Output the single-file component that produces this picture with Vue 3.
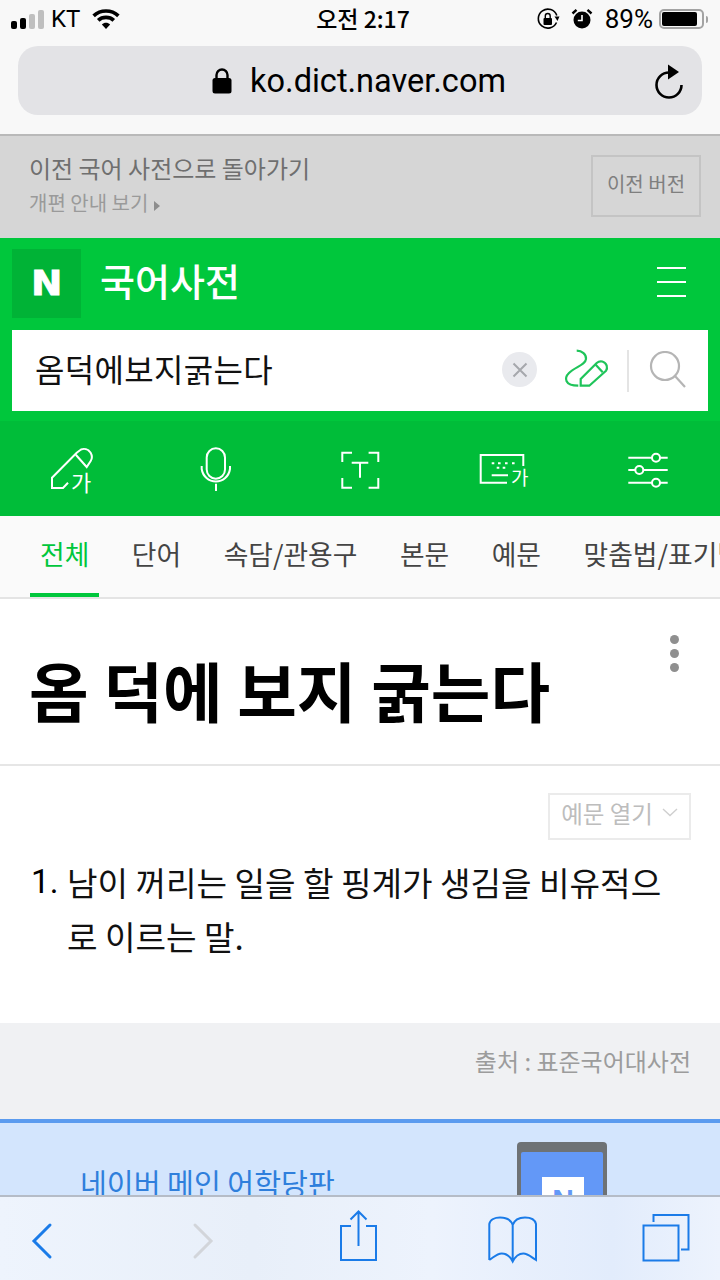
<template>
  <div class="screen">
    <header class="browser-top">
      <div class="status">
        <div class="status-left">
          <div class="signal"><i class="on h1"></i><i class="on h2"></i><i class="h3"></i><i class="h4"></i></div>
          <span class="carrier">KT</span>
          <svg class="wifi" width="28" height="22" viewBox="0 0 30 24">
            <path d="M1.5 8.5C9 1.5 21 1.5 28.5 8.5" fill="none" stroke="#000" stroke-width="4" />
            <path d="M6.5 13.5C11 9.2 19 9.2 23.5 13.5" fill="none" stroke="#000" stroke-width="4" />
            <path d="M10.5 18C13 15.4 17 15.4 19.5 18L15 23Z" fill="#000" />
          </svg>
        </div>
        <span class="clock">오전 2:17</span>
        <div class="status-right">
          <svg width="24" height="24" viewBox="0 0 24 24">
            <path d="M20.5 15.5A9.5 9.5 0 1 1 20.8 8.5" fill="none" stroke="#000" stroke-width="1.6" />
            <path d="M23.5 9.5L18.5 9.5L21.5 14Z" fill="#000" />
            <rect x="7.5" y="11" width="8.5" height="7" rx="1" fill="#000" />
            <path d="M9.3 11V9a2.4 2.4 0 0 1 4.9 0v2" fill="none" stroke="#000" stroke-width="1.4" />
          </svg>
          <svg class="alarm" width="22" height="24" viewBox="0 0 22 24">
            <circle cx="11" cy="13" r="8.5" fill="#000" />
            <path d="M11 8v5.5H6.8" fill="none" stroke="#fff" stroke-width="1.6" />
            <path d="M1.5 6.5L5.5 2.8M20.5 6.5L16.5 2.8" stroke="#000" stroke-width="2.4" />
          </svg>
          <span class="pct">89%</span>
          <div class="battery"><div class="battery-fill"></div></div>
          <div class="battery-nub"></div>
        </div>
      </div>
      <div class="url-bar">
        <div class="url">
          <svg width="20" height="26" viewBox="0 0 20 26">
            <rect x="0.5" y="10" width="19" height="15.5" rx="2.5" fill="#000" />
            <path d="M4.5 11V7a5.5 5.5 0 0 1 11 0v4" fill="none" stroke="#000" stroke-width="2.4" />
          </svg>
          <span>ko.dict.naver.com</span>
        </div>
        <svg class="reload" width="32" height="36" viewBox="0 0 32 36">
          <path d="M16 8.5A12.5 12.5 0 1 0 28.5 21" fill="none" stroke="#000" stroke-width="2.6" />
          <path d="M15 0.5L26 8L15 15.5Z" fill="#000" />
        </svg>
      </div>
    </header>

    <section class="old-version">
      <div class="old-text">
        <p class="old-title">이전 국어 사전으로 돌아가기</p>
        <p class="old-sub">개편 안내 보기 <span class="caret"></span></p>
      </div>
      <button class="old-btn">이전 버전</button>
    </section>

    <section class="green-head">
      <div class="brand-row">
        <div class="brand"><div class="n-box"><span>N</span></div><h1>국어사전</h1></div>
        <div class="menu"><i></i><i></i><i></i></div>
      </div>
      <div class="search">
        <span class="query">옴덕에보지굵는다</span>
        <span class="clear">
          <svg width="16" height="16" viewBox="0 0 16 16"><path d="M1.5 1.5L14.5 14.5M14.5 1.5L1.5 14.5" stroke="#a6a8ac" stroke-width="2" /></svg>
        </span>
        <svg class="pen" width="48" height="44" viewBox="0 0 48 44" fill="none" stroke="#1fc45a" stroke-width="2.2">
          <path d="M14.7 3.7C20 3.7 24.5 7.5 24 12C23.5 18 13 20 7 26C2 31 2.5 38.7 16.3 38.7" />
          <path d="M18.7 38.7V32L34.7 16C38 13 43 14 44.7 18.7C45.2 20.5 45 22.5 44 23.7L27.3 38.7Z" />
          <path d="M33 17L40.7 25.3" />
        </svg>
        <span class="search-sep"></span>
        <svg class="glass" width="38" height="38" viewBox="0 0 38 38" fill="none" stroke="#b5b5b5" stroke-width="2.2">
          <circle cx="16" cy="15" r="14" />
          <path d="M26 25L36 36" />
        </svg>
      </div>
    </section>

    <nav class="tools">
      <div class="tool">
        <svg width="56" height="56" viewBox="0 0 56 56" fill="none" stroke="#fff" stroke-width="2">
          <path d="M24 41.7L19 47H8V36.7L32.7 11.7L37 8.5C40 7.2 44 8 46.5 11.5C48.5 15 48 18 46.7 20L42.7 26L32 14" />
          <text x="27" y="50" class="ga" font-size="22">가</text>
        </svg>
      </div>
      <div class="tool">
        <svg width="56" height="56" viewBox="0 0 56 56" fill="none" stroke="#fff" stroke-width="2">
          <rect x="18.7" y="7.3" width="18.3" height="30.4" rx="9.15" />
          <path d="M13.7 25V28A14.3 14.7 0 0 0 42 28V25M28 42.7V50" />
        </svg>
      </div>
      <div class="tool">
        <svg width="56" height="56" viewBox="0 0 56 56" fill="none" stroke="#fff" stroke-width="2">
          <path d="M20 11.7H10.3V21M36.6 11.7H46.3V21M10.3 37V46.7H20M46.3 37V46.7H36.6" />
          <path d="M19.7 21.7H36.3M28 21.7V36.7" />
        </svg>
      </div>
      <div class="tool">
        <svg width="56" height="56" viewBox="0 0 56 56" fill="none" stroke="#fff" stroke-width="2">
          <path d="M47.3 25V14H4.7V41.7H31" />
          <path d="M15.7 22.3h2.6M22 22.3h2.6M29 22.3h2.6M36 22.3h2.6M20.7 26.7h2.6M26.7 26.7h2.6M15.7 34.3H32" />
          <text x="35" y="44" class="ga" font-size="19">가</text>
        </svg>
      </div>
      <div class="tool">
        <svg width="56" height="56" viewBox="0 0 56 56" fill="#00bd39" stroke="#fff" stroke-width="2">
          <path d="M8.3 16.7H47.7M8.3 29H47.7M8.3 41.7H47.7" />
          <circle cx="36" cy="16.7" r="4" />
          <circle cx="19.3" cy="29" r="4" />
          <circle cx="36" cy="41.7" r="4" />
        </svg>
      </div>
    </nav>

    <div class="tabs">
      <span v-for="(tab, i) in tabs" :key="tab" class="tab" :class="{ active: i === 0 }">{{ tab }}</span>
    </div>

    <section class="entry-head">
      <h2>옴 덕에 보지 굵는다</h2>
      <div class="kebab"><i></i><i></i><i></i></div>
    </section>

    <section class="entry-body">
      <div class="ex-row">
        <button class="ex-btn">
          예문 열기
          <svg width="16" height="9" viewBox="0 0 16 9" fill="none" stroke="#cfcfcf" stroke-width="1.4"><path d="M1 1L8 7.5L15 1" /></svg>
        </button>
      </div>
      <div class="meaning">
        <span class="num">1.</span>
        <p>남이 꺼리는 일을 할 핑계가 생김을 비유적으로 이르는 말.</p>
      </div>
    </section>

    <div class="source">출처 : 표준국어대사전</div>

    <section class="promo">
      <span class="promo-text">네이버 메인 어학당판</span>
      <div class="phone">
        <div class="phone-screen"><span class="phone-n">N</span></div>
      </div>
    </section>

    <footer class="toolbar">
      <svg width="24" height="38" viewBox="0 0 24 38" fill="none" stroke="#1a7be8" stroke-width="3" stroke-linecap="round">
        <path d="M20 3L4 19L20 35" />
      </svg>
      <svg width="24" height="38" viewBox="0 0 24 38" fill="none" stroke="#d2d5da" stroke-width="3" stroke-linecap="round">
        <path d="M4 3L20 19L4 35" />
      </svg>
      <svg width="40" height="54" viewBox="0 0 40 54" fill="none" stroke="#1a7be8" stroke-width="2">
        <path d="M12 16H2V50H37V16H27M19.5 36V2M11.5 9.5L19.5 1.5L27.5 9.5" />
      </svg>
      <svg width="50" height="48" viewBox="0 0 50 48" fill="none" stroke="#1a7be8" stroke-width="2">
        <path d="M1.3 44V8C2 3.5 7 1.5 12 1.5C18 1.5 23 4 24.7 9C26.4 4 31 1.5 37 1.5C42 1.5 47 3.5 48 8V44C43 41 40 37.5 35.3 37.5C31 37.5 27 41 24.7 45.5C22.4 41 18 37.5 13.7 37.5C9 37.5 6 41 1.3 44M24.7 9V45" />
      </svg>
      <svg width="48" height="48" viewBox="0 0 48 48" fill="none" stroke="#1a7be8" stroke-width="2">
        <rect x="1.5" y="11.5" width="35" height="35" />
        <path d="M11.5 8V1H46.5V35.5H39" />
      </svg>
    </footer>
  </div>
</template>

<script setup>
const tabs = ['전체', '단어', '속담/관용구', '본문', '예문', '맞춤법/표기법']
</script>

<style>
html, body { background: #fff; }
</style>

<style scoped>
.screen {
  position: relative;
  width: 720px;
  height: 1280px;
  overflow: hidden;
  background: #fff;
  font-family: "Noto Sans CJK KR", "Liberation Sans", sans-serif;
  color: #000;
}
p, h1, h2 { margin: 0; font-weight: 400; }
button { font-family: inherit; background: none; padding: 0; }

.browser-top {
  height: 134px;
  background: #f8f8f8;
  border-bottom: 2px solid #b9b9b9;
}
.status {
  position: relative;
  height: 46px;
  display: flex;
  align-items: center;
  justify-content: space-between;
  padding: 0 12px 8px 11px;
  box-sizing: border-box;
  font-family: Roboto, "Noto Sans CJK KR", sans-serif;
  font-size: 24px;
}
.status-left, .status-right { display: flex; align-items: center; }
.signal { display: flex; align-items: flex-end; gap: 3px; height: 19px; }
.signal i { width: 6px; background: #bfbfbf; border-radius: 2px; }
.signal .on { background: #000; }
.signal .h1 { height: 8px; }
.signal .h2 { height: 11px; }
.signal .h3 { height: 15px; }
.signal .h4 { height: 19px; }
.carrier { margin-left: 7px; }
.wifi { margin-left: 12px; }
.clock {
  position: absolute;
  left: 6px;
  right: 0;
  top: 3px;
  text-align: center;
  font-weight: 500;
  font-family: "Noto Sans CJK KR", sans-serif;
  font-size: 23px;
  line-height: 30px;
}
.alarm { margin-left: 11px; }
.pct { margin-left: 12px; font-size: 26px; }
.battery {
  margin-left: 6px;
  width: 45px;
  height: 20px;
  box-sizing: border-box;
  border: 2px solid #a3a3a3;
  border-radius: 5px;
  padding: 1px;
}
.battery-fill { width: 35px; height: 14px; background: #000; border-radius: 2px; }
.battery-nub { width: 2px; height: 7px; background: #a3a3a3; margin-left: 2px; border-radius: 0 2px 2px 0; }

.url-bar {
  position: relative;
  height: 69px;
  margin: 0 18px;
  border-radius: 20px;
  background: #e3e3e6;
  display: flex;
  align-items: center;
  justify-content: center;
}
.url { display: flex; align-items: center; gap: 18px; font-family: Roboto, sans-serif; font-size: 32.5px; padding-right: 2px; }
.reload { position: absolute; right: 17px; top: 18px; }

.old-version {
  height: 102px;
  box-sizing: border-box;
  background: #d6d6d6;
  display: flex;
  align-items: center;
  justify-content: space-between;
  padding: 0 19px 0 29px;
}
.old-text { margin-bottom: 5px; }
.old-title { font-size: 24px; line-height: 34px; color: #6f6f6f; }
.old-sub { font-size: 20px; line-height: 30px; color: #9a9a9a; margin-top: 3px; }
.caret {
  display: inline-block;
  border-left: 6px solid #8d8d8d;
  border-top: 5px solid transparent;
  border-bottom: 5px solid transparent;
  margin-left: 1px;
}
.old-btn {
  width: 110px;
  height: 62px;
  margin-bottom: 2px;
  padding-bottom: 6px;
  border: 2px solid #c4c4c4;
  color: #7f7f7f;
  font-size: 20px;
}

.green-head { background: #00c73c; padding: 11px 12px 10px; }
.brand-row { display: flex; align-items: center; justify-content: space-between; }
.brand { display: flex; align-items: center; gap: 19px; }
.n-box {
  width: 69px;
  height: 69px;
  background: #00b336;
  color: #fff;
  display: flex;
  align-items: center;
  justify-content: center;
  font-family: "DejaVu Sans", sans-serif;
  font-weight: 700;
  font-size: 33px;
}
.n-box span { display: block; transform: scaleX(1.12); -webkit-text-stroke: 1px #fff; }
h1 { color: #fff; font-size: 38px; line-height: 69px; font-weight: 500; margin-top: -8px; }
.menu { display: flex; flex-direction: column; gap: 12px; margin-right: 22px; margin-top: -4px; }
.menu i { display: block; width: 29px; height: 2px; background: #fff; }
.search {
  margin-top: 12px;
  height: 81px;
  background: #fff;
  display: flex;
  align-items: center;
  padding: 0 22px 0 23px;
}
.query { font-size: 32px; flex: 1; color: #111; margin-bottom: 6px; letter-spacing: 0.3px; }
.clear {
  width: 35px;
  height: 35px;
  margin-top: -2px;
  border-radius: 50%;
  background: #e9eaee;
  display: flex;
  align-items: center;
  justify-content: center;
}
.pen { margin-left: 25px; margin-top: -3px; }
.search-sep { width: 2px; height: 42px; background: #e4e4e4; margin: 0 20px 0 17px; }
.glass { margin-top: -2px; margin-right: -1px; }

.tools { height: 95px; background: #00bd39; display: grid; grid-template-columns: repeat(5, 1fr); }
.tool { display: flex; align-items: center; justify-content: center; }
.ga { fill: #fff; stroke: none; font-family: "Noto Sans CJK KR", sans-serif; }

.tabs {
  height: 83px;
  box-sizing: border-box;
  display: flex;
  background: #fafafa;
  border-bottom: 2px solid #e4e4e4;
  padding-left: 30px;
  white-space: nowrap;
  overflow: hidden;
}
.tab {
  flex: none;
  padding: 0 10px;
  margin-right: 22.5px;
  font-size: 26.8px;
  line-height: 76px;
  color: #444;
  height: 81px;
  box-sizing: border-box;
}
.tab.active { color: #00c73c; border-bottom: 4px solid #00c73c; }

.entry-head {
  position: relative;
  height: 167px;
  box-sizing: border-box;
  border-bottom: 2px solid #e6e6e6;
  padding: 44px 0 0 29px;
}
h2 { font-size: 64.8px; line-height: 92px; font-weight: 700; }
.kebab { position: absolute; right: 41px; top: 36px; display: flex; flex-direction: column; gap: 5px; }
.kebab i { width: 9px; height: 9px; border-radius: 50%; background: #8f8f8f; }

.entry-body { height: 257px; box-sizing: border-box; padding: 27px 29px 0 31px; }
.ex-row { display: flex; justify-content: flex-end; }
.ex-btn {
  width: 143px;
  height: 47px;
  padding-bottom: 8px;
  border: 2px solid #ebebeb;
  color: #bdbdbd;
  font-size: 23.5px;
  display: flex;
  align-items: center;
  justify-content: center;
  gap: 9px;
}
.meaning { display: flex; margin-top: 15px; font-size: 33.2px; line-height: 54px; }
.num { width: 36px; flex: none; font-family: Roboto, sans-serif; }
.meaning p { width: 600px; color: #111; }

.source {
  height: 96px;
  box-sizing: border-box;
  background: #f0f1f3;
  padding: 20px 29px 0 0;
  text-align: right;
  font-size: 24px;
  line-height: 36px;
  color: #9c9c9c;
}

.promo {
  height: 160px;
  box-sizing: border-box;
  background: #d3e5fd;
  border-top: 4px solid #5b9bef;
  display: flex;
  justify-content: space-between;
  padding: 19px 113px 0 80px;
}
.promo-text { font-size: 29.2px; line-height: 80px; height: 80px; color: #2f7fdc; }
.phone { width: 90px; height: 140px; background: #6e7275; border-radius: 4px; padding: 10px 4px 0; box-sizing: border-box; }
.phone-screen { height: 130px; background: #6398f7; border-radius: 2px; padding: 25px 0 0 21px; box-sizing: border-box; }
.phone-n {
  display: block;
  width: 42px;
  height: 42px;
  background: #fff;
  color: #6398f7;
  font-family: "Liberation Sans", sans-serif;
  font-weight: 700;
  font-size: 30px;
  line-height: 46px;
  text-align: center;
}

.toolbar {
  position: absolute;
  left: 0;
  right: 0;
  bottom: 0;
  height: 85px;
  box-sizing: border-box;
  border-top: 2px solid #b5bcc7;
  background: linear-gradient(90deg, #eef4fd 0%, #e8eff9 35%, #edf3fd 60%, #e2ecfc 85%, #edf3fd 100%);
}
.toolbar svg { position: absolute; }
.toolbar svg:nth-child(1) { left: 30px; top: 25px; }
.toolbar svg:nth-child(2) { left: 191px; top: 25px; }
.toolbar svg:nth-child(3) { left: 339px; top: 13px; }
.toolbar svg:nth-child(4) { left: 488px; top: 19px; }
.toolbar svg:nth-child(5) { left: 642px; top: 17px; }
</style>
